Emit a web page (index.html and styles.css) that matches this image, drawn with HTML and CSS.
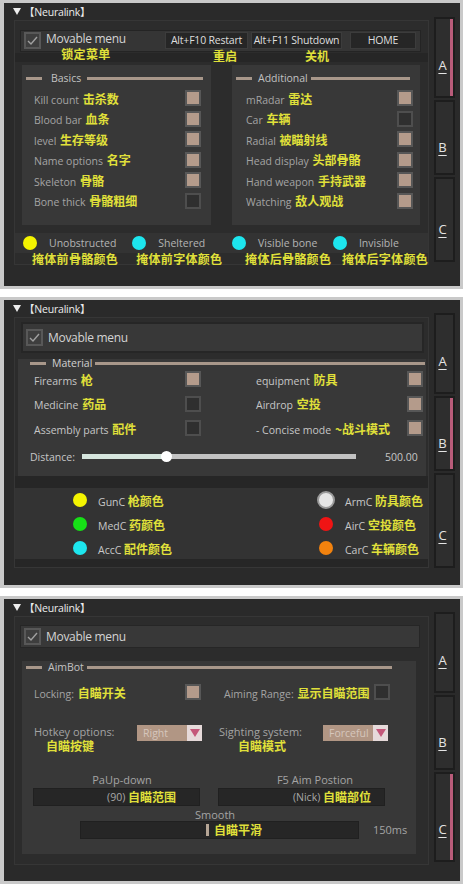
FILE: index.html
```html
<!DOCTYPE html>
<html>

<head>
    <title>Neuralink</title>
    <link rel="stylesheet" href="styles.css">
</head>

<body>
    <!-- Visuals page -->
    <div class="shot s1">
        <div class="titlebar">
            <svg class="tri" viewBox="0 0 8 7"><polygon points="0,0 8,0 4,7" /></svg>
            <span class="wtitle">【Neuralink】</span>
        </div>
        <div class="win">
            <div class="frame">
                <div class="menu-row">
                    <span class="tick"><svg viewBox="0 0 13 13"><path d="M2 7 L5 10 L11 3" /></svg></span>
                    <div class="cap"><span class="cap-en">Movable menu</span><span class="zh">锁定菜单</span></div>
                    <div class="hk hk-restart"><span class="hk-btn">Alt+F10 Restart</span><span class="zh">重启</span></div>
                    <div class="hk hk-shut"><span class="hk-btn">Alt+F11 Shutdown</span><span class="zh">关机</span></div>
                    <div class="hk hk-home"><span class="hk-btn">HOME</span></div>
                </div>

                <div class="band"></div>

                <div class="groups">
                    <div class="group g-left">
                        <div class="ghead"><i class="gline short"></i><span>Basics</span><i class="gline"></i></div>
                        <div class="opt"><span>Kill count <b class="zh">击杀数</b></span><i class="cb on"></i></div>
                        <div class="opt"><span>Blood bar <b class="zh">血条</b></span><i class="cb on"></i></div>
                        <div class="opt"><span>level <b class="zh">生存等级</b></span><i class="cb on"></i></div>
                        <div class="opt"><span>Name options <b class="zh">名字</b></span><i class="cb on"></i></div>
                        <div class="opt"><span>Skeleton <b class="zh">骨骼</b></span><i class="cb on"></i></div>
                        <div class="opt"><span>Bone thick <b class="zh">骨骼粗细</b></span><i class="cb"></i></div>
                    </div>
                    <div class="group g-right">
                        <div class="ghead"><i class="gline short"></i><span>Additional</span><i class="gline"></i></div>
                        <div class="opt"><span>mRadar <b class="zh">雷达</b></span><i class="cb on"></i></div>
                        <div class="opt"><span>Car <b class="zh">车辆</b></span><i class="cb"></i></div>
                        <div class="opt"><span>Radial <b class="zh">被瞄射线</b></span><i class="cb on"></i></div>
                        <div class="opt"><span>Head display <b class="zh">头部骨骼</b></span><i class="cb on"></i></div>
                        <div class="opt"><span>Hand weapon <b class="zh">手持武器</b></span><i class="cb on"></i></div>
                        <div class="opt"><span>Watching <b class="zh">敌人观战</b></span><i class="cb on"></i></div>
                    </div>
                </div>

                <div class="swatches">
                    <div class="sw sw1">
                        <div class="sw-top"><i class="dot yellow"></i><span>Unobstructed</span></div>
                        <span class="zh sw-zh">掩体前骨骼颜色</span>
                    </div>
                    <div class="sw sw2">
                        <div class="sw-top"><i class="dot cyan"></i><span>Sheltered</span></div>
                        <span class="zh sw-zh">掩体前字体颜色</span>
                    </div>
                    <div class="sw sw3">
                        <div class="sw-top"><i class="dot cyan"></i><span>Visible bone</span></div>
                        <span class="zh sw-zh">掩体后骨骼颜色</span>
                    </div>
                    <div class="sw sw4">
                        <div class="sw-top"><i class="dot cyan"></i><span>Invisible</span></div>
                        <span class="zh sw-zh">掩体后字体颜色</span>
                    </div>
                </div>
            </div>

            <div class="tabs">
                <div class="tab on"><u>A</u></div>
                <div class="tab"><u>B</u></div>
                <div class="tab"><u>C</u></div>
            </div>
        </div>
    </div>

    <!-- Items page -->
    <div class="shot s2">
        <div class="titlebar">
            <svg class="tri" viewBox="0 0 8 7"><polygon points="0,0 8,0 4,7" /></svg>
            <span class="wtitle">【Neuralink】</span>
        </div>
        <div class="win">
            <div class="frame">
                <div class="menu-row tall">
                    <span class="tick"><svg viewBox="0 0 13 13"><path d="M2 7 L5 10 L11 3" /></svg></span>
                    <span class="cap-en">Movable menu</span>
                </div>

                <div class="sect">
                    <div class="ghead"><i class="gline short"></i><span>Material</span><i class="gline"></i></div>
                    <div class="items">
                        <div class="opt"><span>Firearms <b class="zh">枪</b></span><i class="cb on"></i></div>
                        <div class="opt"><span>equipment <b class="zh">防具</b></span><i class="cb on"></i></div>
                        <div class="opt"><span>Medicine <b class="zh">药品</b></span><i class="cb"></i></div>
                        <div class="opt"><span>Airdrop <b class="zh">空投</b></span><i class="cb on"></i></div>
                        <div class="opt"><span>Assembly parts <b class="zh">配件</b></span><i class="cb"></i></div>
                        <div class="opt"><span>- Concise mode <b class="zh">~战斗模式</b></span><i class="cb on"></i></div>
                    </div>
                    <div class="dist">
                        <span>Distance:</span>
                        <div class="track"><i class="fill" style="width: 84px"></i><i class="knob"></i></div>
                        <span class="dist-val">500.00</span>
                    </div>
                </div>

                <div class="band"></div>

                <div class="colors">
                    <div class="crow"><span class="slot"><i class="dot yellow"></i></span><span>GunC <b class="zh">枪颜色</b></span></div>
                    <div class="crow"><span class="slot"><i class="dot ring"></i></span><span>ArmC <b class="zh">防具颜色</b></span></div>
                    <div class="crow"><span class="slot"><i class="dot green"></i></span><span>MedC <b class="zh">药颜色</b></span></div>
                    <div class="crow"><span class="slot"><i class="dot red"></i></span><span>AirC <b class="zh">空投颜色</b></span></div>
                    <div class="crow"><span class="slot"><i class="dot cyan"></i></span><span>AccC <b class="zh">配件颜色</b></span></div>
                    <div class="crow"><span class="slot"><i class="dot orange"></i></span><span>CarC <b class="zh">车辆颜色</b></span></div>
                </div>

                <div class="band thin"></div>
            </div>

            <div class="tabs">
                <div class="tab"><u>A</u></div>
                <div class="tab on"><u>B</u></div>
                <div class="tab"><u>C</u></div>
            </div>
        </div>
    </div>

    <!-- Aim page -->
    <div class="shot s3">
        <div class="titlebar">
            <svg class="tri" viewBox="0 0 8 7"><polygon points="0,0 8,0 4,7" /></svg>
            <span class="wtitle">【Neuralink】</span>
        </div>
        <div class="win">
            <div class="frame">
                <div class="menu-row wide">
                    <span class="tick"><svg viewBox="0 0 13 13"><path d="M2 7 L5 10 L11 3" /></svg></span>
                    <span class="cap-en">Movable menu</span>
                </div>

                <div class="group aim">
                    <div class="ghead"><i class="gline short"></i><span>AimBot</span><i class="gline"></i></div>

                    <div class="aim-row">
                        <div class="opt lock"><span>Locking: <b class="zh">自瞄开关</b></span><i class="cb on"></i></div>
                        <div class="opt range"><span>Aiming Range: <b class="zh">显示自瞄范围</b></span><i class="cb"></i></div>
                    </div>

                    <div class="aim-row keys">
                        <div class="keyset">
                            <div class="klabel"><span>Hotkey options:</span><b class="zh">自瞄按键</b></div>
                            <div class="combo"><span>Right</span><i class="arrow"></i></div>
                        </div>
                        <div class="keyset second">
                            <div class="klabel"><span>Sighting system:</span><b class="zh">自瞄模式</b></div>
                            <div class="combo"><span>Forceful</span><i class="arrow"></i></div>
                        </div>
                    </div>

                    <div class="aim-row inputs">
                        <div class="field">
                            <span class="flabel">PaUp-down</span>
                            <div class="fbox">(90) <b class="zh">自瞄范围</b></div>
                        </div>
                        <div class="field second">
                            <span class="flabel">F5 Aim Postion</span>
                            <div class="fbox">(Nick) <b class="zh">自瞄部位</b></div>
                        </div>
                    </div>

                    <div class="smooth">
                        <span class="flabel">Smooth</span>
                        <div class="smooth-row">
                            <div class="sbox"><i class="grab"></i><b class="zh">自瞄平滑</b></div>
                            <span class="ms">150ms</span>
                        </div>
                    </div>
                </div>
            </div>

            <div class="tabs">
                <div class="tab"><u>A</u></div>
                <div class="tab"><u>B</u></div>
                <div class="tab on"><u>C</u></div>
            </div>
        </div>
    </div>
</body>

</html>
```

FILE: styles.css
```css
* {
    box-sizing: border-box;
}

body {
    margin: 0;
    width: 463px;
    background: #fff;
    font-family: "Open Sans", "Noto Sans CJK SC", sans-serif;
    font-size: 10.5px;
    color: #a4a4a4;
}

b,
i {
    font-style: normal;
}

.zh {
    font-family: "Noto Sans CJK SC", sans-serif;
    font-size: 12px;
    font-weight: 700;
    color: #e0e03a;
}

/* Window shell */
.shot {
    display: flex;
    flex-direction: column;
    border: 3px solid #c9c9c9;
    border-left-width: 4px;
    background: #2a2a2a;
}

.shot + .shot {
    margin-top: 8px;
}

.s1 {
    height: 289px;
}

.s2 {
    height: 291px;
}

.s3 {
    height: 288px;
}

.titlebar {
    flex: none;
    height: 17px;
    display: flex;
    align-items: center;
    padding-left: 9px;
    color: #ececec;
    font-size: 10.5px;
}

.tri {
    width: 8px;
    height: 7px;
    fill: #eee;
}

.wtitle {
    margin-left: 3px;
    letter-spacing: -0.2px;
}

.win {
    flex: 1;
    display: flex;
    align-items: flex-start;
    padding-left: 10px;
}

.frame {
    width: 415px;
    background: #2c2c2c;
    border: 1px solid #363636;
}

.s1 .frame {
    height: 245px;
}

.s2 .frame {
    height: 251px;
}

.s3 .frame {
    height: 249px;
}

/* Side tabs */
.tabs {
    width: 21px;
    margin: -4px 0 0 5px;
    display: flex;
    flex-direction: column;
    gap: 2px;
}

.s1 .tabs {
    margin-top: -3px;
    height: 245px;
}

.s2 .tabs {
    height: 255px;
}

.s3 .tabs {
    height: 250px;
}

.tab {
    display: flex;
    align-items: flex-end;
    justify-content: center;
    padding: 0 4px 24px 0;
    background: #2e2e2e;
    border: 2px solid #1d1d1d;
    color: #e4e4e4;
    font-size: 13px;
    line-height: 14px;
}

.tab:nth-child(1) {
    height: 81px;
}

.tab:nth-child(2) {
    height: 75px;
    padding-bottom: 19px;
}

.tab:nth-child(3) {
    flex: 1;
}

.tab.on {
    box-shadow: inset -3px 0 0 #b95c7a;
}

.tab u {
    text-decoration-thickness: 1px;
    text-underline-offset: 3px;
}

/* Movable menu row */
.menu-row {
    display: flex;
    align-items: flex-start;
    height: 22px;
    margin: 9px 7px 0 5px;
    padding: 1px 4px 0 3px;
    background: #353535;
    border: 1px solid #242424;
    font-size: 12px;
    color: #d4d4d4;
}

.menu-row.tall {
    height: 31px;
    margin: 4px 4px 0 6px;
    align-items: center;
    padding-top: 0;
    background: #383838;
    border: 2px solid #262626;
}

.menu-row.wide {
    height: 23px;
    margin: 8px 8px 0 5px;
    align-items: center;
    padding-top: 0;
    background: #383838;
    border: 1px solid #262626;
}

.tick {
    flex: none;
    width: 17px;
    height: 17px;
    background: #3e3e3e;
    border: 2px solid #585858;
}

.tick svg {
    display: block;
    width: 13px;
    height: 13px;
    fill: none;
    stroke: #a0a0a0;
    stroke-width: 1.4;
}

.cap {
    display: flex;
    flex-direction: column;
    align-items: center;
    margin-left: 5px;
    line-height: 14px;
}

.cap-en {
    letter-spacing: -0.3px;
    margin-left: 5px;
}

.cap .cap-en {
    margin-left: 0;
}

.cap .zh {
    margin-top: 1px;
    line-height: 13px;
    letter-spacing: 0.4px;
}

.hk {
    display: flex;
    flex-direction: column;
    line-height: 13px;
}

.hk-restart {
    margin-left: auto;
}

.hk-shut {
    margin-left: 3px;
}

.hk-home {
    margin-left: 8px;
}

.hk-btn {
    flex: none;
    height: 17px;
    display: flex;
    align-items: center;
    justify-content: center;
    background: #262626;
    border: 1px solid #3c3c3c;
    color: #dedede;
    font-size: 10.5px;
    letter-spacing: -0.2px;
}

.hk-restart .hk-btn {
    width: 83px;
}

.hk-shut .hk-btn {
    width: 91px;
}

.hk-home .hk-btn {
    width: 66px;
}

.hk-restart .zh {
    padding-left: 48px;
}

.hk-shut .zh {
    padding-left: 54px;
}

/* strip between the menu row and the groups */
.s1 .band {
    height: 9px;
    margin-top: 1px;
}

/* Group boxes */
.groups {
    display: flex;
    gap: 21px;
    margin: 3px 0 0 7px;
}

.group {
    background: #383838;
    padding: 0 10px 0 12px;
}

.g-left {
    width: 189px;
    height: 160px;
}

.g-right {
    width: 188px;
    height: 160px;
    padding: 0 7px 0 14px;
}

.ghead {
    display: flex;
    align-items: center;
    gap: 6px;
    height: 12px;
    margin: 7px -2px 0 -8px;
    color: #c2c2c2;
    font-size: 10.5px;
}

.g-right .ghead {
    margin: 7px 3px 0 -10px;
    gap: 3px;
}

.gline {
    flex: 1;
    height: 3px;
    background: #a8978a;
}

.gline.short {
    flex: none;
    width: 16px;
    margin-right: 3px;
}

.opt {
    display: flex;
    align-items: center;
    justify-content: space-between;
    height: 20.5px;
    white-space: nowrap;
}

.ghead + .opt {
    margin-top: 4px;
}

.opt .zh {
    margin-left: 1px;
}

.cb {
    flex: none;
    width: 16px;
    height: 16px;
    background: #2f2f2f;
    border: 2px solid #4e4e4e;
}

.cb.on {
    background: #b49b8b;
    border-color: #575757;
}

/* Colour pickers, visuals page */
.swatches {
    display: flex;
    align-items: flex-start;
    height: 20px;
    margin-top: 8px;
    padding-left: 8px;
    background: #333;
    color: #b4b4b4;
}

.sw {
    display: flex;
    flex-direction: column;
    white-space: nowrap;
}

.sw1 {
    width: 116px;
}

.sw2 {
    width: 106px;
}

.sw3 {
    width: 107px;
}

.sw-top {
    flex: none;
    display: flex;
    align-items: center;
    gap: 12px;
    height: 20px;
}

.sw-zh {
    flex: none;
    line-height: 11px;
    margin: 0 0 0 9px;
    letter-spacing: 0.3px;
}

.sw2 .sw-zh {
    margin-left: 4px;
}

.sw3 .sw-zh {
    margin-left: 13px;
}

.dot {
    flex: none;
    width: 14px;
    height: 14px;
    border-radius: 50%;
}

.yellow {
    background: #f4f400;
}

.cyan {
    background: #1de6ee;
}

.green {
    background: #16e016;
}

.red {
    background: #f01414;
}

.orange {
    background: #f2820e;
}

.ring {
    width: 18px;
    height: 18px;
    background: #e6e6e6;
    border: 2px solid #9a9a9a;
}

/* Items page */
.sect {
    height: 117px;
    margin: 4px 2px 0 3px;
    padding-left: 16px;
    background: #383838;
    color: #c6c6c6;
}

.sect .ghead {
    margin: 6px 1px 0 -4px;
    gap: 3px;
    height: 8px;
    color: #d0d0d0;
}

.items {
    display: grid;
    grid-template-columns: 167px 167px;
    column-gap: 55px;
}

.items .opt {
    height: 24.5px;
}

.dist {
    display: flex;
    align-items: center;
    height: 20px;
    margin: 6px 0 0 -4px;
}

.track {
    display: flex;
    align-items: center;
    width: 274px;
    height: 5px;
    margin-left: 7px;
    background: #c2c2c2;
}

.track .fill {
    height: 5px;
    background: #d6e6de;
}

.knob {
    width: 11px;
    height: 11px;
    margin-left: -5px;
    border-radius: 50%;
    background: #fff;
}

.dist-val {
    margin-left: 29px;
}

.band {
    height: 12px;
    background: #262626;
}

.band.thin {
    height: 8px;
}

.colors {
    display: grid;
    grid-template-columns: 246px auto;
    height: 71px;
    padding-left: 56px;
    background: #333;
    color: #c8c8c8;
}

.crow {
    display: flex;
    align-items: center;
    height: 24px;
    white-space: nowrap;
}

.crow:nth-child(2n) .slot {
    margin-right: 10px;
}

.slot {
    display: flex;
    align-items: center;
    justify-content: center;
    width: 18px;
    margin-right: 9px;
}

/* Aim page */
.group.aim {
    width: 394px;
    height: 193px;
    margin: 13px 0 0 7px;
    padding: 0 0 0 12px;
}

.aim .ghead {
    margin: 7px 24px 0 -8px;
    gap: 3px;
}

.aim-row {
    display: flex;
    align-items: center;
    margin-top: 9px;
    white-space: nowrap;
}

.lock {
    width: 167px;
}

.range {
    width: 166px;
    margin-left: 23px;
}

.keys {
    align-items: flex-start;
    margin-top: 22px;
}

.keyset {
    display: flex;
    align-items: flex-start;
}

.keyset.second {
    margin-left: 17px;
}

.klabel {
    display: flex;
    flex-direction: column;
    align-items: flex-start;
    width: 103px;
    margin-top: 1px;
    line-height: 12px;
    font-size: 11px;
}

.klabel .zh {
    margin: 1px 0 0 12px;
    line-height: 13px;
}

.keyset.second .klabel {
    width: 104px;
}

.keyset.second .klabel .zh {
    margin-left: 19px;
}

.combo {
    display: flex;
    align-items: center;
    width: 65px;
    height: 16px;
    background: #b19684;
    color: #d6c6bc;
    font-size: 10.5px;
    padding-left: 6px;
}

.combo span {
    flex: 1;
}

.arrow {
    width: 15px;
    height: 16px;
    background: #e6dada;
    position: relative;
}

.arrow::after {
    content: "";
    position: absolute;
    left: 3px;
    top: 4px;
    border-left: 5px solid transparent;
    border-right: 5px solid transparent;
    border-top: 8px solid #c4587a;
}

.inputs {
    align-items: flex-start;
    margin: 21px 0 0 -1px;
}

.field {
    display: flex;
    flex-direction: column;
    align-items: center;
    width: 167px;
}

.field.second {
    margin-left: 18px;
}

.flabel {
    line-height: 14px;
    font-size: 11px;
    padding-left: 11px;
}

.field.second .flabel {
    padding-left: 27px;
}

.fbox {
    width: 100%;
    height: 18px;
    margin-top: 1px;
    display: flex;
    align-items: center;
    justify-content: flex-end;
    padding-right: 23px;
    background: #262626;
    border: 1px solid #202020;
    color: #a8a8a8;
    white-space: pre;
}

.field.second .fbox {
    padding-right: 13px;
}

.smooth {
    display: flex;
    flex-direction: column;
    margin: 3px 0 0 46px;
}

.smooth .flabel {
    align-self: flex-start;
    line-height: 12px;
    padding-left: 115px;
}

.smooth-row {
    display: flex;
    align-items: center;
}

.sbox {
    display: flex;
    align-items: center;
    width: 279px;
    height: 18px;
    padding-left: 125px;
    background: #262626;
    border: 1px solid #202020;
}

.grab {
    width: 3px;
    height: 12px;
    margin-right: 5px;
    background: #b5a595;
}

.ms {
    margin-left: 14px;
    font-size: 11px;
}
```
